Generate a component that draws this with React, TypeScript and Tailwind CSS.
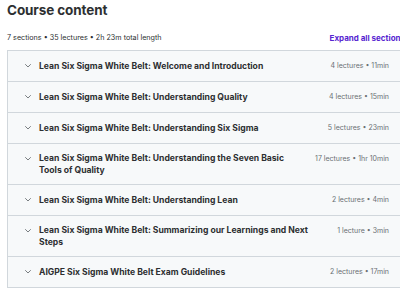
import React from "react";

const sections: { title: string; meta: string }[] = [
  { title: "Lean Six Sigma White Belt: Welcome and Introduction", meta: "4 lectures • 11min" },
  { title: "Lean Six Sigma White Belt: Understanding Quality", meta: "4 lectures • 15min" },
  { title: "Lean Six Sigma White Belt: Understanding Six Sigma", meta: "5 lectures • 23min" },
  { title: "Lean Six Sigma White Belt: Understanding the Seven Basic Tools of Quality", meta: "17 lectures • 1hr 10min" },
  { title: "Lean Six Sigma White Belt: Understanding Lean", meta: "2 lectures • 4min" },
  { title: "Lean Six Sigma White Belt: Summarizing our Learnings and Next Steps", meta: "1 lecture • 3min" },
  { title: "AIGPE Six Sigma White Belt Exam Guidelines", meta: "2 lectures • 17min" },
];

function Chevron() {
  return (
    <svg width="8" height="13" viewBox="0 0 8 13" className="shrink-0">
      <path d="M1.5 5.5 L4 8 L6.5 5.5" fill="none" stroke="#6a6f73" strokeWidth="0.9" strokeLinecap="round" strokeLinejoin="round" />
    </svg>
  );
}

export default function App() {
  return (
    <div className="w-[400px] h-[288px] overflow-hidden bg-white" style={{ fontFamily: "Inter, 'Noto Sans', sans-serif" }}>
      <div className="w-[413px] px-[7px]">
        <h2 className="text-[13.5px] leading-[20px] font-bold text-[#2d2f31] tracking-[-0.1px]">Course content</h2>
        <div className="mt-[13px] flex items-center justify-between h-[10px]">
          <span className="text-[7.2px] text-[#2d2f31]">7 sections • 35 lectures • 2h 23m total length</span>
          <span className="text-[8px] font-bold text-[#5624d0] mr-[1px]">Expand all sections</span>
        </div>
        <div className="mt-[7px] border border-[#d1d7dc]">
          {sections.map((s, i) => (
            <div
              key={i}
              className={`flex items-start bg-[#f7f9fa] pl-[16px] pr-[16px] py-[8px] gap-[24px] ${i > 0 ? "border-t border-[#d1d7dc]" : ""}`}
            >
              <div className="flex flex-1 items-start gap-[7px]">
                <div className="h-[13px] flex items-center"><Chevron /></div>
                <div className="flex-1 min-h-[14px] flex items-center">
                  <span className="text-[8.6px] leading-[12px] font-bold text-[#2d2f31]">{s.title}</span>
                </div>
              </div>
              <div className="shrink-0 min-h-[14px] flex items-center">
                <span className="text-[7px] leading-[12px] text-[#6a6f73]">{s.meta}</span>
              </div>
            </div>
          ))}
        </div>
      </div>
    </div>
  );
}
